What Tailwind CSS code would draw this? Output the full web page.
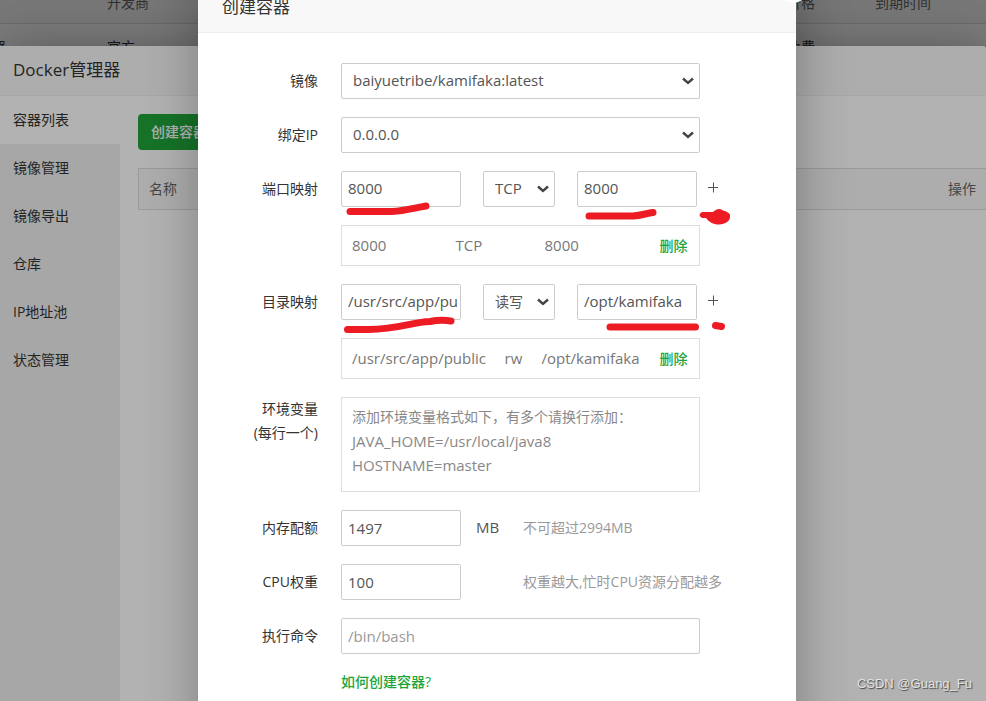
<!DOCTYPE html>
<html lang="zh-CN">
<head>
<meta charset="utf-8">
<title>创建容器</title>
<script src="https://cdn.jsdelivr.net/npm/@tailwindcss/browser@4"></script>
</head>
<body class="relative h-screen overflow-hidden bg-white font-['Open_Sans','Noto_Sans_CJK_SC',sans-serif] text-sm text-[#333]">

  <!-- Software list page -->
  <div class="h-full overflow-hidden">
    <table class="-mt-4 -ml-7 w-[calc(100%+28px)] table-fixed text-left">
      <thead>
        <tr class="h-[39px] border-b border-[#ddd] bg-[#f6f6f6] text-[#666]">
          <td class="w-[135px]"></td>
          <th class="w-[680px] font-normal">开发商</th>
          <th class="w-[88px] font-normal">价格</th>
          <th class="font-normal">到期时间</th>
        </tr>
      </thead>
      <tbody>
        <tr class="h-12 border-b border-[#ddd]">
          <td class="pl-5">器</td><td>官方</td><td>免费</td><td></td>
        </tr>
      </tbody>
    </table>
  </div>
  <div class="absolute inset-0 bg-black/30"></div>

  <!-- Docker manager window -->
  <section class="absolute inset-x-0 top-[46px] -bottom-20 flex flex-col rounded-tr-sm bg-white shadow-[1px_1px_50px_rgba(0,0,0,0.3)]">
    <header class="flex h-[50px] shrink-0 items-center rounded-tr-sm border-b border-[#eee] bg-[#f8f8f8] px-[13px]">
      <h1 class="text-[17px]">Docker管理器</h1>
    </header>
    <div class="flex grow">
      <nav class="flex w-[120px] shrink-0 flex-col bg-[#f0f0f0]">
        <a href="#" class="bg-white px-[13px] leading-[48px]">容器列表</a>
        <a href="#" class="px-[13px] leading-[48px]">镜像管理</a>
        <a href="#" class="px-[13px] leading-[48px]">镜像导出</a>
        <a href="#" class="px-[13px] leading-[48px]">仓库</a>
        <a href="#" class="px-[13px] leading-[48px]">IP地址池</a>
        <a href="#" class="px-[13px] leading-[48px]">状态管理</a>
      </nav>
      <div class="grow pt-[18px] pl-[18px]">
        <button type="button" class="h-9 rounded-sm bg-[#20a53a] px-[13px] font-medium text-white">创建容器</button>
        <table class="mt-[18px] w-full border border-r-0 border-[#ddd]">
          <thead>
            <tr class="h-[41px] bg-[#f8f8f8] text-[#666]">
              <th class="pl-[10px] text-left font-normal">名称</th>
              <th class="pr-[10px] text-right font-normal">操作</th>
            </tr>
          </thead>
        </table>
      </div>
    </div>
  </section>
  <div class="absolute inset-0 bg-black/30"></div>

  <!-- Create container dialog -->
  <div class="absolute inset-x-0 -top-[17px] -bottom-20 flex justify-center pl-2">
    <section class="relative w-full max-w-[598px] bg-white shadow-[1px_1px_50px_rgba(0,0,0,0.3)]">
      <button type="button" aria-label="关闭" class="absolute -top-[10px] -right-3 size-[30px] rounded-full bg-white"></button>
      <header class="flex h-[50px] items-center border-b border-[#eee] bg-[#f8f8f8] px-6">
        <h2 class="text-[17px]">创建容器</h2>
      </header>

      <form class="flex flex-col gap-[18px] pt-[30px] text-[15px] text-[#555]">
        <div class="flex gap-[23px]">
          <label for="image" class="w-[120px] shrink-0 text-right text-sm leading-9 text-[#333]">镜像</label>
          <div class="relative w-[359px]">
            <select id="image" class="h-9 w-full appearance-none rounded-xs border border-[#ccc] bg-white px-[11px]"><option>baiyuetribe/kamifaka:latest</option></select>
            <svg viewBox="0 0 12 8" class="pointer-events-none absolute top-[14px] right-[6px] h-2 w-3 fill-none stroke-[#444] stroke-[2.4]"><path d="M1 1.500L6 6L11 1.500"/></svg>
          </div>
        </div>
        <div class="flex gap-[23px]">
          <label for="ip" class="w-[120px] shrink-0 text-right text-sm leading-9 text-[#333]">绑定IP</label>
          <div class="relative w-[359px]">
            <select id="ip" class="h-9 w-full appearance-none rounded-xs border border-[#ccc] bg-white px-[11px]"><option>0.0.0.0</option></select>
            <svg viewBox="0 0 12 8" class="pointer-events-none absolute top-[14px] right-[6px] h-2 w-3 fill-none stroke-[#444] stroke-[2.4]"><path d="M1 1.500L6 6L11 1.500"/></svg>
          </div>
        </div>

        <div class="flex gap-[23px]">
          <label for="port" class="w-[120px] shrink-0 text-right text-sm leading-9 text-[#333]">端口映射</label>
          <div class="flex flex-col gap-[18px]">
            <div class="flex h-9">
              <input id="port" value="8000" class="w-[120px] rounded-xs border border-[#ccc] px-[6px]">
              <div class="relative mx-[22px] w-[72px]">
                <select aria-label="协议" class="h-9 w-full appearance-none rounded-xs border border-[#ccc] bg-white px-[11px]"><option>TCP</option></select>
                <svg viewBox="0 0 12 8" class="pointer-events-none absolute top-[14px] right-[6px] h-2 w-3 fill-none stroke-[#444] stroke-[2.4]"><path d="M1 1.500L6 6L11 1.500"/></svg>
              </div>
              <input aria-label="服务器端口" value="8000" class="w-[120px] rounded-xs border border-[#ccc] px-[6px]">
              <button type="button" aria-label="添加端口" class="ml-[10px] flex h-8 items-center">
                <svg viewBox="0 0 12 12" class="size-3 stroke-[#555]"><path d="M1 6.500H11M6.500 1.500V11.500"/></svg>
              </button>
            </div>
            <table class="h-[41px] w-[359px] table-fixed border border-[#ddd] text-[#777]">
              <tbody><tr>
                <td class="w-[114px] pl-[10px]">8000</td><td class="w-[89px]">TCP</td><td>8000</td>
                <td class="w-10 text-sm"><a href="#" class="font-medium text-[#20a53a]">删除</a></td>
              </tr></tbody>
            </table>
          </div>
        </div>

        <div class="flex gap-[23px]">
          <label for="path" class="w-[120px] shrink-0 text-right text-sm leading-9 text-[#333]">目录映射</label>
          <div class="flex flex-col gap-[18px]">
            <div class="flex h-9">
              <input id="path" value="/usr/src/app/public" class="w-[120px] rounded-xs border border-[#ccc] pr-[3px] pl-[6px]">
              <div class="relative mx-[22px] w-[72px]">
                <select aria-label="权限" class="h-9 w-full appearance-none rounded-xs border border-[#ccc] bg-white px-[11px] text-sm"><option>读写</option></select>
                <svg viewBox="0 0 12 8" class="pointer-events-none absolute top-[14px] right-[6px] h-2 w-3 fill-none stroke-[#444] stroke-[2.4]"><path d="M1 1.500L6 6L11 1.500"/></svg>
              </div>
              <input aria-label="服务器目录" value="/opt/kamifaka" class="w-[120px] rounded-xs border border-[#ccc] px-[6px]">
              <button type="button" aria-label="添加目录" class="ml-[10px] flex h-8 items-center">
                <svg viewBox="0 0 12 12" class="size-3 stroke-[#555]"><path d="M1 6.500H11M6.500 1.500V11.500"/></svg>
              </button>
            </div>
            <table class="h-[41px] w-[359px] table-fixed border border-[#ddd] text-[#777]">
              <tbody><tr>
                <td class="w-[163px] pl-[10px]">/usr/src/app/public</td><td class="w-[37px]">rw</td><td>/opt/kamifaka</td>
                <td class="w-10 text-sm"><a href="#" class="font-medium text-[#20a53a]">删除</a></td>
              </tr></tbody>
            </table>
          </div>
        </div>

        <div class="flex gap-[23px]">
          <label for="env" class="w-[120px] shrink-0 text-right text-sm leading-6 text-[#333]">环境变量<br>(每行一个)</label>
          <div class="relative h-[95px] w-[359px]">
            <textarea id="env" class="size-full resize-none border border-[#ddd] px-[10px] py-2 leading-6"></textarea>
            <label for="env" class="absolute top-2 left-[11px] leading-6 text-[#888]"><span class="block text-sm leading-6">添加环境变量格式如下，有多个请换行添加：</span>JAVA_HOME=/usr/local/java8<br>HOSTNAME=master</label>
          </div>
        </div>
        <div class="flex gap-[23px]">
          <label for="mem" class="w-[120px] shrink-0 text-right text-sm leading-9 text-[#333]">内存配额</label>
          <div class="flex items-center">
            <input id="mem" value="1497" class="h-9 w-[120px] rounded-xs border border-[#ccc] px-[6px]">
            <span class="w-[62px] pl-[15px]">MB</span>
            <span class="text-sm text-[#999]">不可超过2994MB</span>
          </div>
        </div>
        <div class="flex gap-[23px]">
          <label for="cpu" class="w-[120px] shrink-0 text-right text-sm leading-9 text-[#333]">CPU权重</label>
          <div class="flex items-center">
            <input id="cpu" value="100" class="h-9 w-[120px] rounded-xs border border-[#ccc] px-[6px]">
            <span class="pl-[62px] text-sm text-[#999]">权重越大,忙时CPU资源分配越多</span>
          </div>
        </div>
        <div class="flex gap-[23px]">
          <label for="cmd" class="w-[120px] shrink-0 text-right text-sm leading-9 text-[#333]">执行命令</label>
          <input id="cmd" placeholder="/bin/bash" class="h-9 w-[359px] rounded-xs border border-[#ccc] px-[6px] placeholder:text-[#999]">
        </div>
        <a href="#" class="ml-[143px] self-start text-sm font-medium text-[#20a53a]">如何创建容器?</a>
      </form>

      <!-- Hand-drawn marks -->
      <svg class="pointer-events-none absolute top-[17px] left-0 h-[400px] w-[598px] fill-none stroke-[#ed1c24]" viewBox="198 0 598 400" stroke-width="7" stroke-linecap="round" stroke-linejoin="round" aria-hidden="true">
        <path d="M350 211.500H392C405 211 414 208 426 206"/>
        <path d="M589 216H633C641 215.500 646 213.500 653 212.500"/>
        <path d="M347.500 329.500H368C400 329 412 322 430 321.500C438 320 444 320 451 321"/>
        <path d="M610 327H695.500"/>
        <path d="M715.500 325.500L721.500 326.500"/>
        <path d="M702 212H713Q718 207 723 210.500Q729 212 730 215C731 221 725 224.500 719 224.500C713 224.500 709 222 706 218H702Q697 215 702 212Z" fill="#ed1c24" stroke="none"/>
      </svg>
    </section>
  </div>

  <p class="absolute right-[14px] bottom-[7px] font-['Liberation_Sans',sans-serif] text-[13px] text-[#e2e2e2] [text-shadow:1px_1px_1px_#444]">CSDN @Guang_Fu</p>
</body>
</html>
